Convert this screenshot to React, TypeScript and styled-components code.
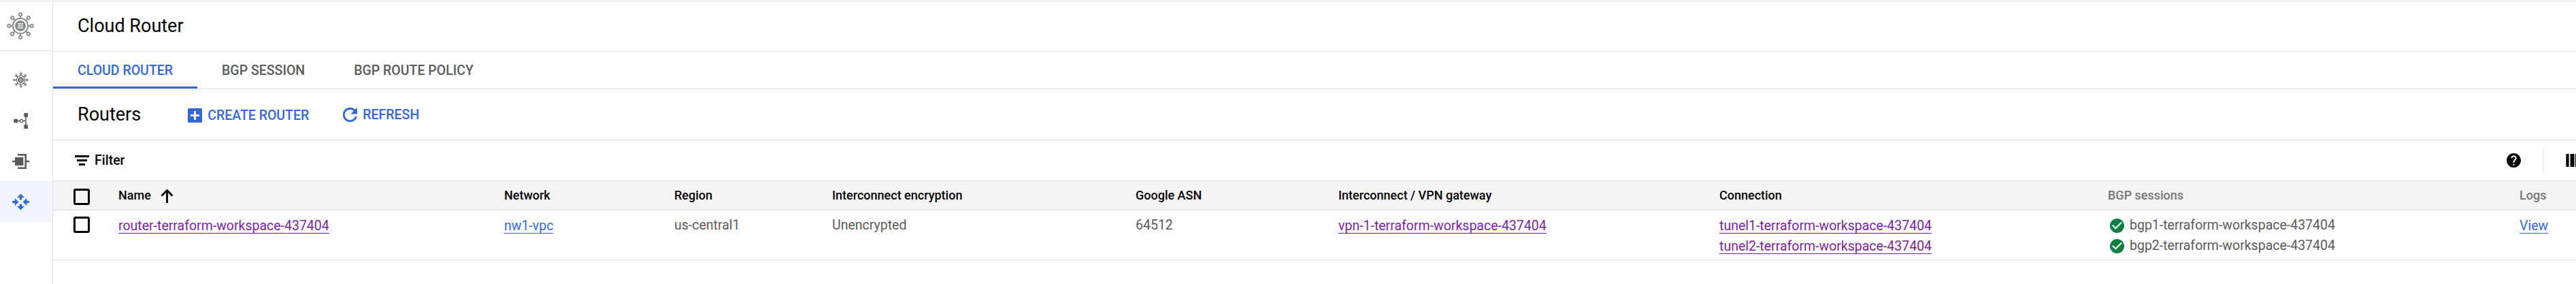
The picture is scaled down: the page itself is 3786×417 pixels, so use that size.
import React from "react";
import styled, { createGlobalStyle, css } from "styled-components";

const LINE = "#e0e0e0";
const BLUE = "#3367d6";
const PURPLE = "#7b1fa2";
const GREY = "#5a5a5a";

const GlobalStyle = createGlobalStyle`
  *, *::before, *::after { box-sizing: border-box; }
  body {
    margin: 0;
    background: #fff;
    color: #000;
    font-family: Roboto, "Liberation Sans", sans-serif;
    overflow: hidden;
  }
  svg { display: block; flex: none; }
`;

const Page = styled.div`
  display: flex;
  width: 3786px;
  height: 417px;
  padding-top: 1px;
  overflow: hidden;
`;

const Sidebar = styled.nav`
  flex: none;
  width: 78px;
  border-top: 1px solid ${LINE};
  border-right: 1px solid ${LINE};
`;

const ProductIcon = styled.div`
  height: 73px;
  border-bottom: 1px solid ${LINE};
  margin-bottom: 11px;
`;

const NavItem = styled.div<{ $active?: boolean }>`
  height: 60px;
  background: ${(p) => (p.$active ? "#f0f5ff" : "transparent")};
`;

const Main = styled.main`
  flex: 1;
  min-width: 0;
  border-top: 1px solid ${LINE};
`;

const TitleBar = styled.header`
  display: flex;
  align-items: center;
  height: 74px;
  padding: 0 0 1px 36px;
  border-bottom: 1px solid ${LINE};
`;

const Heading = styled.h1`
  margin: 0;
  font-size: 27px;
  font-weight: 400;
  line-height: 36px;
`;

const Tabs = styled.div`
  display: flex;
  height: 55px;
  border-bottom: 1px solid ${LINE};
`;

const Tab = styled.div<{ $active?: boolean }>`
  padding: 13px 36px 0;
  height: 54px;
  font-size: 19.5px;
  font-weight: 500;
  line-height: 29px;
  color: ${(p) => (p.$active ? BLUE : GREY)};
  border-bottom: 3px solid ${(p) => (p.$active ? BLUE : "transparent")};
`;

const ActionBar = styled.div`
  display: flex;
  align-items: center;
  height: 75px;
  padding-left: 36px;
  border-bottom: 1px solid ${LINE};
`;

const Action = styled.div<{ $gap: number; $drop: number }>`
  display: flex;
  align-items: center;
  gap: 8px;
  margin-top: ${(p) => p.$drop}px;
  margin-left: ${(p) => p.$gap}px;
  font-size: 19.5px;
  font-weight: 500;
  line-height: 29px;
  color: ${BLUE};
`;

const FilterBar = styled.div`
  display: flex;
  align-items: center;
  height: 60px;
  padding-left: 32px;
  border-bottom: 1px solid ${LINE};
`;

const FilterLabel = styled.span`
  margin-left: 8px;
  font-size: 19.5px;
  font-weight: 500;
  line-height: 29px;
`;

const FilterTools = styled.div`
  display: flex;
  align-items: center;
  margin-left: auto;
`;

const Divider = styled.div`
  width: 1px;
  height: 36px;
  margin: 0 33px 0 32px;
  background: ${LINE};
`;

const rowGrid = css`
  display: grid;
  grid-template-columns: 96px 567px 250px 232px 446px 298px 560px 571px 605px 83px;
`;

const TableHead = styled.div`
  ${rowGrid}
  height: 43px;
  background: #f4f4f4;
  border-bottom: 1px solid ${LINE};
`;

const HeadCell = styled.div<{ $muted?: boolean }>`
  display: flex;
  align-items: flex-start;
  gap: 12px;
  padding-top: 7px;
  font-size: 18px;
  font-weight: 500;
  line-height: 27px;
  white-space: nowrap;
  color: ${(p) => (p.$muted ? "#757575" : "#000")};
`;

const TableRow = styled.div`
  ${rowGrid}
  height: 73px;
  border-bottom: 1px solid ${LINE};
`;

const Cell = styled.div`
  padding-top: 7px;
  font-size: 19.5px;
  line-height: 29px;
  white-space: nowrap;
  color: ${GREY};
`;

const CheckCell = styled.div<{ $top: number }>`
  padding: ${(p) => p.$top}px 0 0 30px;
`;

const Checkbox = styled.div`
  width: 24px;
  height: 24px;
  border: 3px solid #000;
  border-radius: 3px;
`;

const LinkLine = styled.div`
  display: flex;
  align-items: flex-start;
  height: 30px;
  padding-top: 1px;
`;

const Link = styled.a<{ $visited?: boolean }>`
  height: 26px;
  border-bottom: 1px solid currentColor;
  color: ${(p) => (p.$visited ? PURPLE : BLUE)};
`;

const Session = styled.div`
  display: flex;
  align-items: flex-start;
  gap: 8px;
  height: 30px;
  padding-left: 3px;

  svg { margin-top: 5px; }
`;

const HubIcon = ({ cx, cy, s, color, line }: { cx: number; cy: number; s: number; color: string; line: number }) => (
  <g transform={`translate(${cx} ${cy}) scale(${s})`} fill="none" stroke={color} strokeWidth={line}>
    <circle r="11.2" />
    <circle r="7.8" fill={color} stroke="none" />
    <path d="M-4.2 -3H4.2M-4.2 0H4.2M-4.2 3H4.2" stroke="#fff" strokeWidth="1.3" />
    {[0, 45, 90, 135, 180, 225, 270, 315].map((a) => (
      <g key={a} transform={`rotate(${a})`}>
        <path d="M0 -11.2V-14.4" />
        <circle cy="-16.7" r="2.2" />
      </g>
    ))}
  </g>
);

const PlusBox = () => (
  <svg width="21" height="21" viewBox="0 0 21 21">
    <rect width="21" height="21" rx="1.5" fill={BLUE} />
    <path d="M10.5 4V17M4 10.5H17" stroke="#fff" strokeWidth="3" />
  </svg>
);

const RefreshIcon = () => (
  <svg width="21" height="21" viewBox="4 4 16 16" fill={BLUE}>
    <path d="M17.65 6.35C16.2 4.9 14.21 4 12 4c-4.42 0-7.99 3.58-7.99 8s3.57 8 7.99 8c3.73 0 6.84-2.55 7.73-6h-2.08c-.82 2.33-3.04 4-5.65 4-3.31 0-6-2.69-6-6s2.69-6 6-6c1.66 0 3.14.69 4.22 1.78L13 11h7V4l-2.35 2.35z" stroke={BLUE} strokeWidth="0.3" />
  </svg>
);

const FilterIcon = () => (
  <svg width="21" height="15" viewBox="0 0 21 15">
    <path d="M0 1.5H21M3 7.5H18M6 13.5H15" stroke="#000" strokeWidth="3" />
  </svg>
);

const SortArrow = () => (
  <svg width="23" height="26" viewBox="0 0 23 26" fill="none" stroke="#000" strokeWidth="2.8">
    <path d="M11.5 25V6.5M3.5 14.5L11.5 6.5L19.5 14.5" />
  </svg>
);

const HelpIcon = () => (
  <svg width="21" height="21" viewBox="2 2 20 20">
    <path d="M12 2C6.48 2 2 6.48 2 12s4.48 10 10 10 10-4.48 10-10S17.52 2 12 2zm1 17h-2v-2h2v2zm2.07-7.75l-.9.92C13.45 12.9 13 13.5 13 15h-2v-.5c0-1.1.45-2.1 1.17-2.83l1.24-1.26c.37-.36.59-.86.59-1.41 0-1.1-.9-2-2-2s-2 .9-2 2H8c0-2.21 1.79-4 4-4s4 1.79 4 4c0 .88-.36 1.68-.93 2.25z" />
  </svg>
);

const ColumnsIcon = () => (
  <svg width="15" height="19" viewBox="0 0 15 19">
    <path d="M0.4 0H4.6V19H0.4zM6.6 0H12.6V19H6.6zM14 0H15V19H14z" />
  </svg>
);

const CheckIcon = () => (
  <svg width="21" height="21" viewBox="2 2 20 20">
    <path fill="#0b8043" d="M12 2C6.48 2 2 6.48 2 12s4.48 10 10 10 10-4.48 10-10S17.52 2 12 2zm-2 15l-5-5 1.41-1.41L10 14.17l7.59-7.59L19 8l-9 9z" />
  </svg>
);

const columns = [
  "Network",
  "Region",
  "Interconnect encryption",
  "Google ASN",
  "Interconnect / VPN gateway",
  "Connection",
];

export default function App() {
  return (
    <>
      <GlobalStyle />
      <Page>
        <Sidebar>
          <ProductIcon>
            <svg width="60" height="72" viewBox="0 2 60 72">
              <HubIcon cx={30} cy={38} s={1} color="#80868b" line={1.7} />
            </svg>
          </ProductIcon>
          <NavItem>
            <svg width="60" height="60" viewBox="0 86 60 60">
              <HubIcon cx={30.5} cy={117.5} s={0.56} color="#5f5f5f" line={1.9} />
            </svg>
          </NavItem>
          <NavItem>
            <svg width="60" height="60" viewBox="0 146 60 60">
              <path d="M25 177.5H37M38 168V187" stroke={GREY} strokeWidth="1.6" />
              <path d="M20.3 174.7h5.6v5.6h-5.6zM35.3 166h5.7v5.7h-5.7zM35.3 183.3h5.7v5.7h-5.7z" fill={GREY} />
              <circle cx="31.5" cy="177.5" r="2.2" fill="#fff" stroke={GREY} strokeWidth="1.2" />
            </svg>
          </NavItem>
          <NavItem>
            <svg width="60" height="60" viewBox="0 206 60 60">
              <path d="M22 231h12.3v12H22zM18 235.7h4v2.6h-4zM38 235.7h5v2.6h-5z" fill={GREY} />
              <path d="M26 227.3H37.7V246.7H26" fill="none" stroke={GREY} strokeWidth="2.5" />
            </svg>
          </NavItem>
          <NavItem $active>
            <svg width="60" height="60" viewBox="0 266 60 60">
              <g fill={BLUE}>
                <path d="M30.5 284.5L36 290.3H32.2V293.5H28.8V290.3H25z" />
                <path d="M30.5 308.5L36 302.7H32.2V299.5H28.8V302.7H25z" />
                <path d="M27.5 296.5L21.7 302.3V298H18V295H21.7V290.7z" />
                <path d="M33.5 296.5L39.3 302.3V298H43V295H39.3V290.7z" />
              </g>
            </svg>
          </NavItem>
        </Sidebar>
        <Main>
          <TitleBar>
            <Heading>Cloud Router</Heading>
          </TitleBar>
          <Tabs>
            <Tab $active>CLOUD ROUTER</Tab>
            <Tab>BGP SESSION</Tab>
            <Tab>BGP ROUTE POLICY</Tab>
          </Tabs>
          <ActionBar>
            <Heading as="h2">Routers</Heading>
            <Action $gap={69} $drop={3}>
              <PlusBox />
              CREATE ROUTER
            </Action>
            <Action $gap={50} $drop={1}>
              <RefreshIcon />
              REFRESH
            </Action>
          </ActionBar>
          <FilterBar>
            <FilterIcon />
            <FilterLabel>Filter</FilterLabel>
            <FilterTools>
              <HelpIcon />
              <Divider />
              <ColumnsIcon />
            </FilterTools>
          </FilterBar>
          <TableHead>
            <CheckCell $top={11}>
              <Checkbox />
            </CheckCell>
            <HeadCell>
              Name
              <SortArrow />
            </HeadCell>
            {columns.map((c) => (
              <HeadCell key={c}>{c}</HeadCell>
            ))}
            <HeadCell $muted>BGP sessions</HeadCell>
            <HeadCell $muted>Logs</HeadCell>
          </TableHead>
          <TableRow>
            <CheckCell $top={9}>
              <Checkbox />
            </CheckCell>
            <Cell>
              <LinkLine>
                <Link $visited>router-terraform-workspace-437404</Link>
              </LinkLine>
            </Cell>
            <Cell>
              <LinkLine>
                <Link>nw1-vpc</Link>
              </LinkLine>
            </Cell>
            <Cell>us-central1</Cell>
            <Cell>Unencrypted</Cell>
            <Cell>64512</Cell>
            <Cell>
              <LinkLine>
                <Link $visited>vpn-1-terraform-workspace-437404</Link>
              </LinkLine>
            </Cell>
            <Cell>
              <LinkLine>
                <Link $visited>tunel1-terraform-workspace-437404</Link>
              </LinkLine>
              <LinkLine>
                <Link $visited>tunel2-terraform-workspace-437404</Link>
              </LinkLine>
            </Cell>
            <Cell>
              <Session>
                <CheckIcon />
                bgp1-terraform-workspace-437404
              </Session>
              <Session>
                <CheckIcon />
                bgp2-terraform-workspace-437404
              </Session>
            </Cell>
            <Cell>
              <LinkLine>
                <Link>View</Link>
              </LinkLine>
            </Cell>
          </TableRow>
        </Main>
      </Page>
    </>
  );
}
